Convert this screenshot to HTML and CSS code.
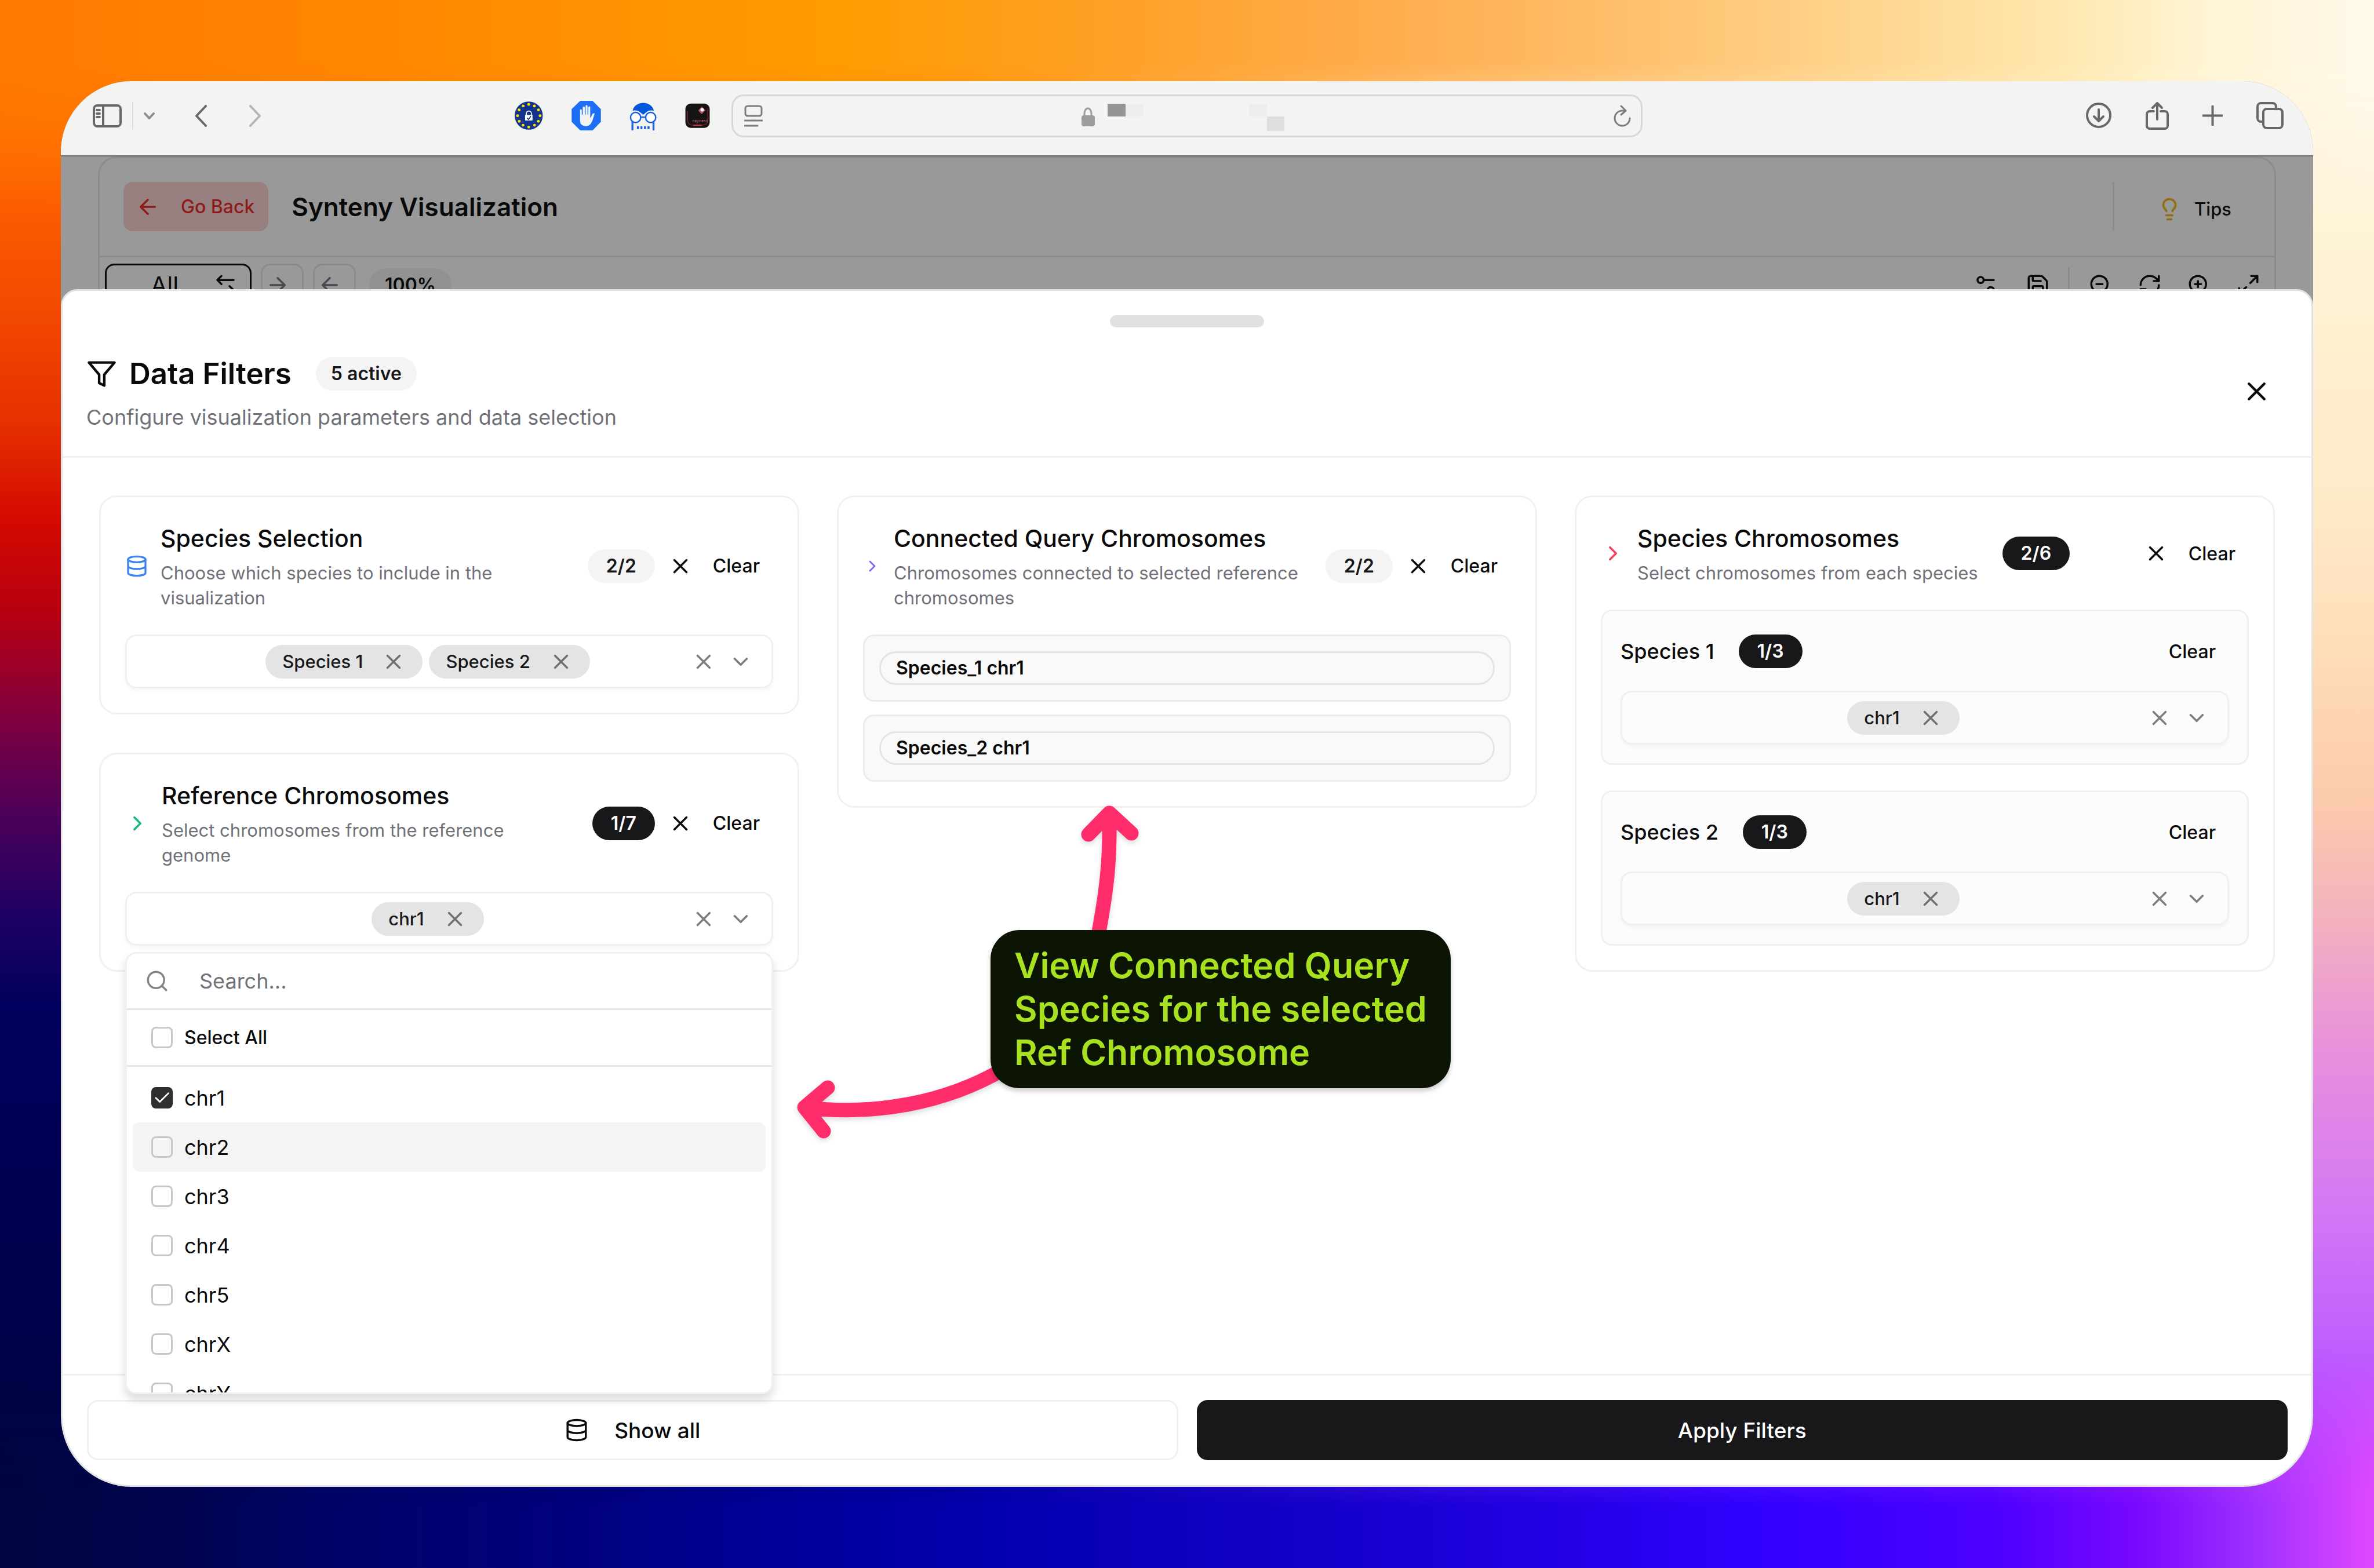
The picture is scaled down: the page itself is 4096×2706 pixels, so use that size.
FILE: index.html
```html
<!DOCTYPE html>
<html lang="en">
<head>
<meta charset="utf-8">
<title>Synteny Visualization</title>
<link rel="stylesheet" href="styles.css">
</head>
<body>
<svg class="sprite" aria-hidden="true">
  <symbol id="i-x" viewBox="0 0 24 24"><path d="M18 6 6 18M6 6l12 12"/></symbol>
  <symbol id="i-down" viewBox="0 0 24 24"><path d="m6 9 6 6 6-6"/></symbol>
  <symbol id="i-right" viewBox="0 0 24 24"><path d="m9 18 6-6-6-6"/></symbol>
  <symbol id="i-db" viewBox="0 0 24 24"><ellipse cx="12" cy="5" rx="9" ry="3"/><path d="M3 5v14a9 3 0 0 0 18 0V5M3 12a9 3 0 0 0 18 0"/></symbol>
  <symbol id="i-filter" viewBox="0 0 24 24"><path d="M22 3H2l8 9.46V19l4 2v-8.54z"/></symbol>
  <symbol id="i-arrow-left" viewBox="0 0 24 24"><path d="m12 19-7-7 7-7M19 12H5"/></symbol>
  <symbol id="i-arrow-right" viewBox="0 0 24 24"><path d="M5 12h14M12 5l7 7-7 7"/></symbol>
  <symbol id="i-swap" viewBox="0 0 24 24"><path d="M8 3 4 7l4 4M4 7h16M16 21l4-4-4-4M20 17H4"/></symbol>
  <symbol id="i-bulb" viewBox="0 0 24 24"><path d="M15 14c.2-1 .7-1.700 1.500-2.500 1-.9 1.500-2.200 1.500-3.500A6 6 0 0 0 6 8c0 1 .2 2.200 1.500 3.500.7.7 1.300 1.500 1.500 2.500M9 18h6M10 22h4"/></symbol>
  <symbol id="i-settings" viewBox="0 0 24 24"><path d="M20 7h-9M14 17H5"/><circle cx="17" cy="17" r="3"/><circle cx="7" cy="7" r="3"/></symbol>
  <symbol id="i-save" viewBox="0 0 24 24"><path d="M15.200 3a2 2 0 0 1 1.400.6l3.800 3.800a2 2 0 0 1 .6 1.400V19a2 2 0 0 1-2 2H5a2 2 0 0 1-2-2V5a2 2 0 0 1 2-2zM17 21v-7a1 1 0 0 0-1-1H8a1 1 0 0 0-1 1v7M7 3v4a1 1 0 0 0 1 1h7"/></symbol>
  <symbol id="i-zoom-out" viewBox="0 0 24 24"><circle cx="11" cy="11" r="8"/><path d="m21 21-4.350-4.350M8 11h6"/></symbol>
  <symbol id="i-zoom-in" viewBox="0 0 24 24"><circle cx="11" cy="11" r="8"/><path d="m21 21-4.350-4.350M11 8v6M8 11h6"/></symbol>
  <symbol id="i-refresh" viewBox="0 0 24 24"><path d="M3 12a9 9 0 0 1 9-9 9.750 9.750 0 0 1 6.740 2.740L21 8M21 3v5h-5M21 12a9 9 0 0 1-9 9 9.750 9.750 0 0 1-6.740-2.740L3 16M8 16H3v5"/></symbol>
  <symbol id="i-expand" viewBox="0 0 24 24"><path d="M15 3h6v6M9 21H3v-6M21 3l-7 7M3 21l7-7"/></symbol>
  <symbol id="i-search" viewBox="0 0 24 24"><circle cx="11" cy="11" r="8"/><path d="m21 21-4.350-4.350"/></symbol>
</svg>

<div class="backdrop" aria-hidden="true"></div>

<main class="window">
  <header class="toolbar">
    <nav class="history">
      <button class="tool" aria-label="Sidebar"><svg width="50" height="40" viewBox="0 0 50 40"><rect x="2" y="2" width="46" height="36" rx="6"/><path d="M18 2v36M7 10h5M7 16h5M7 22h5"/></svg></button>
      <span class="bar-rule"></span>
      <button class="tool faint" aria-label="Tab groups"><svg width="19" height="12" viewBox="0 0 19 12"><path d="m2 2 7.500 8L17 2"/></svg></button>
      <button class="tool back" aria-label="Back"><svg width="21" height="38" viewBox="0 0 21 38"><path d="M19 2 3 19l16 17"/></svg></button>
      <button class="tool forward" aria-label="Forward"><svg width="21" height="38" viewBox="0 0 21 38"><path d="m2 2 16 17L2 36"/></svg></button>
    </nav>
    <div class="extensions">
      <button class="tool" aria-label="Privacy"><svg class="plain" width="49" height="49" viewBox="54 101 180 180">
        <circle cx="143" cy="191" r="89" fill="#12348c"/>
        <g fill="#ffe100"><circle cx="143" cy="120" r="9"/><circle cx="179" cy="130" r="9"/><circle cx="205" cy="155" r="9"/><circle cx="215" cy="192" r="9"/><circle cx="204" cy="227" r="9"/><circle cx="180" cy="252" r="9"/><circle cx="143" cy="264" r="9"/><circle cx="107" cy="252" r="9"/><circle cx="83" cy="227" r="9"/><circle cx="72" cy="192" r="9"/><circle cx="82" cy="155" r="9"/><circle cx="108" cy="130" r="9"/></g>
        <path d="M128 190v-12a16 16 0 0 1 32 0v12" fill="none" stroke="#fff" stroke-width="6"/><rect x="120" y="187" width="47" height="35" fill="#fff"/><path d="m134 207 8 9 13-20" fill="none" stroke="#12348c" stroke-width="6"/></svg></button>
      <button class="tool" aria-label="Content blocker"><svg class="plain" width="51" height="51" viewBox="408 98 184 186">
        <path d="M462 98h78l52 52v80l-52 54h-78l-54-54v-80z" fill="#1c6ff6"/>
        <path d="M461 225v-70q5-8 11 0v30h6v-47q6-9 13 0v47h5v-56q6-9 12 0v56h5v-48q6-8 12 0v69q6-3 12-22 6-10 16-7-8 28-17 52-12 28-39 29-35-2-36-33z" fill="#f3f3f1"/></svg></button>
      <button class="tool" aria-label="Disguise"><svg class="plain" width="47" height="50" viewBox="764 102 172 182">
        <path d="M784 160a68 60 0 0 1 134 0q-32-7-52 14l-15 12-15-12q-20-21-52-14z" fill="#0557dc"/>
        <g fill="none" stroke="#1a60e4" stroke-width="9"><circle cx="803" cy="203" r="32" fill="#fff"/><circle cx="898" cy="203" r="32" fill="#fff"/><path d="M835 201h32"/><path d="M783 230v54M916 230v54" stroke-width="12"/></g>
        <path d="M811 258h13v18h-13zM834 258h12v18h-12zM856 258h12v18h-12zM878 258h13v18h-13z" fill="#1a60e4"/></svg></button>
      <button class="tool" aria-label="Launcher"><svg class="plain" width="43" height="43" viewBox="1126 112 156 156">
        <rect x="1128" y="115" width="152" height="152" rx="34" fill="#161314"/>
        <path d="M1142 165v54q0 30 30 30h64q32 0 32-30v-70" fill="none" stroke="#7d2028" stroke-width="5"/><path d="M1180 251h48" stroke="#d43a44" stroke-width="7"/>
        <path d="m1231 134 22 22-23 25-22-23z" fill="#b25a62"/><circle cx="1233" cy="154" r="11" fill="#fff"/>
        <text x="1170" y="230" font-family="Liberation Mono, monospace" font-size="24" fill="#d4727a">raycast</text></svg></button>
    </div>
    <div class="address">
      <button class="tool grey" aria-label="Reader"><svg width="32" height="38" viewBox="0 0 32 38"><rect x="2" y="2" width="28" height="17" rx="4"/><path d="M1 27h30M1 36h22"/></svg></button>
      <svg class="plain" width="366" height="52" viewBox="0 -5 366 52" role="img" aria-label="Secure site"><path d="M5 22v-5a6 9 0 0 1 12 0v5" fill="none" stroke="#9d9d9d" stroke-width="3"/><rect x="0" y="20" width="23" height="19" rx="4" fill="#9d9d9d"/><path d="M45 0h31v22H45z" fill="#949494"/><path d="M76 0h31v22H76zM289 0h31v22h-31z" fill="#ededeb"/><path d="M320 22h30v25h-30z" fill="#dededc"/></svg>
      <button class="tool grey" aria-label="Reload"><svg width="32" height="38" viewBox="0 0 32 38"><path d="M15 2l8 8-8 7M23 10h-6a13 13 0 1 0 13 13"/></svg></button>
    </div>
    <div class="actions">
      <button class="tool" aria-label="Downloads"><svg width="45" height="45" viewBox="0 0 45 45"><circle cx="22" cy="22" r="20"/><path d="M22 12v20M14 24l8 8 8-8"/></svg></button>
      <button class="tool" aria-label="Share"><svg width="40" height="49" viewBox="0 0 40 49"><path d="M14 17H7a5 5 0 0 0-5 5v20a5 5 0 0 0 5 5h26a5 5 0 0 0 5-5V22a5 5 0 0 0-5-5h-7M20 31V3M12 11l8-8 8 8"/></svg></button>
      <button class="tool" aria-label="New tab"><svg width="35" height="35" viewBox="0 0 35 35"><path d="M17.500 1v33M1 17.500h33"/></svg></button>
      <button class="tool" aria-label="Tab overview"><svg width="47" height="47" viewBox="0 0 47 47"><rect x="12" y="12" width="33" height="33" rx="6"/><path d="M12 34H8a6 6 0 0 1-6-6V8a6 6 0 0 1 6-6h20a6 6 0 0 1 6 6v4"/></svg></button>
    </div>
  </header>

  <section class="page">
    <div class="panel">
      <div class="panel-head">
        <button class="go-back"><svg class="icon"><use href="#i-arrow-left"/></svg>Go Back</button>
        <h1>Synteny Visualization</h1>
        <span class="head-rule"></span>
        <button class="tips"><svg class="icon"><use href="#i-bulb"/></svg>Tips</button>
      </div>
      <div class="panel-tools">
        <button class="all">All <svg class="icon"><use href="#i-swap"/></svg></button>
        <button class="step" aria-label="Next"><svg class="icon"><use href="#i-arrow-right"/></svg></button>
        <button class="step" aria-label="Previous"><svg class="icon"><use href="#i-arrow-left"/></svg></button>
        <span class="scale">100%</span>
        <button class="square push" aria-label="Settings"><svg class="icon"><use href="#i-settings"/></svg></button>
        <button class="square spaced" aria-label="Save"><svg class="icon"><use href="#i-save"/></svg></button>
        <span class="tools-rule"></span>
        <button class="square" aria-label="Zoom out"><svg class="icon"><use href="#i-zoom-out"/></svg></button>
        <button class="square" aria-label="Reset"><svg class="icon"><use href="#i-refresh"/></svg></button>
        <button class="square" aria-label="Zoom in"><svg class="icon"><use href="#i-zoom-in"/></svg></button>
        <button class="square" aria-label="Full screen"><svg class="icon"><use href="#i-expand"/></svg></button>
      </div>
    </div>
  </section>

  <section class="sheet">
    <div class="handle"></div>
    <header class="sheet-head">
      <div>
        <div class="sheet-title"><svg class="icon large"><use href="#i-filter"/></svg><h2>Data Filters</h2><span class="badge soft words">5 active</span></div>
        <p>Configure visualization parameters and data selection</p>
      </div>
      <button class="close" aria-label="Close"><svg class="icon large"><use href="#i-x"/></svg></button>
    </header>

    <div class="filters">
      <div class="column">
        <article class="card">
          <div class="card-head">
            <svg class="icon medium blue"><use href="#i-db"/></svg>
            <div class="card-text"><h3>Species Selection</h3><p>Choose which species to include in the visualization</p></div>
            <span class="badge soft">2/2</span>
            <button class="clear"><svg class="icon"><use href="#i-x"/></svg>Clear</button>
          </div>
          <div class="select">
            <div class="chips">
              <span class="chip">Species 1<button aria-label="Remove Species 1"><svg class="icon"><use href="#i-x"/></svg></button></span>
              <span class="chip">Species 2<button aria-label="Remove Species 2"><svg class="icon"><use href="#i-x"/></svg></button></span>
            </div>
            <button aria-label="Clear selection"><svg class="icon"><use href="#i-x"/></svg></button>
            <button aria-label="Open list"><svg class="icon"><use href="#i-down"/></svg></button>
          </div>
        </article>

        <article class="card">
          <div class="card-head">
            <svg class="icon green"><use href="#i-right"/></svg>
            <div class="card-text"><h3>Reference Chromosomes</h3><p>Select chromosomes from the reference genome</p></div>
            <span class="badge">1/7</span>
            <button class="clear"><svg class="icon"><use href="#i-x"/></svg>Clear</button>
          </div>
          <div class="select">
            <div class="chips"><span class="chip">chr1<button aria-label="Remove chr1"><svg class="icon"><use href="#i-x"/></svg></button></span></div>
            <button aria-label="Clear selection"><svg class="icon"><use href="#i-x"/></svg></button>
            <button aria-label="Close list"><svg class="icon"><use href="#i-down"/></svg></button>
            <div class="menu">
              <label class="search"><svg class="icon"><use href="#i-search"/></svg><input type="text" placeholder="Search..." aria-label="Search"></label>
              <label class="select-all"><input type="checkbox">Select All</label>
              <div class="options">
                <label class="option"><input type="checkbox" checked>chr1</label>
                <label class="option active"><input type="checkbox">chr2</label>
                <label class="option"><input type="checkbox">chr3</label>
                <label class="option"><input type="checkbox">chr4</label>
                <label class="option"><input type="checkbox">chr5</label>
                <label class="option"><input type="checkbox">chrX</label>
                <label class="option"><input type="checkbox">chrY</label>
              </div>
            </div>
          </div>
        </article>
      </div>

      <article class="card">
        <div class="card-head">
          <svg class="icon small purple"><use href="#i-right"/></svg>
          <div class="card-text"><h3>Connected Query Chromosomes</h3><p>Chromosomes connected to selected reference chromosomes</p></div>
          <span class="badge soft">2/2</span>
          <button class="clear"><svg class="icon"><use href="#i-x"/></svg>Clear</button>
        </div>
        <ul class="linked">
          <li><span>Species_1 chr1</span></li>
          <li><span>Species_2 chr1</span></li>
        </ul>
      </article>

      <article class="card">
        <div class="card-head">
          <svg class="icon red"><use href="#i-right"/></svg>
          <div class="card-text"><h3>Species Chromosomes</h3><p>Select chromosomes from each species</p></div>
          <span class="badge">2/6</span>
          <button class="clear"><svg class="icon"><use href="#i-x"/></svg>Clear</button>
        </div>
        <div class="groups">
          <section class="group">
            <div class="group-head"><h4>Species 1</h4><span class="badge">1/3</span><button class="clear">Clear</button></div>
            <div class="select">
              <div class="chips"><span class="chip">chr1<button aria-label="Remove chr1"><svg class="icon"><use href="#i-x"/></svg></button></span></div>
              <button aria-label="Clear selection"><svg class="icon"><use href="#i-x"/></svg></button>
              <button aria-label="Open list"><svg class="icon"><use href="#i-down"/></svg></button>
            </div>
          </section>
          <section class="group">
            <div class="group-head"><h4>Species 2</h4><span class="badge">1/3</span><button class="clear">Clear</button></div>
            <div class="select">
              <div class="chips"><span class="chip">chr1<button aria-label="Remove chr1"><svg class="icon"><use href="#i-x"/></svg></button></span></div>
              <button aria-label="Clear selection"><svg class="icon"><use href="#i-x"/></svg></button>
              <button aria-label="Open list"><svg class="icon"><use href="#i-down"/></svg></button>
            </div>
          </section>
        </div>
      </article>
    </div>

    <footer class="sheet-foot">
      <button class="show-all"><svg class="icon"><use href="#i-db"/></svg>Show all</button>
      <button class="apply">Apply Filters</button>
    </footer>
  </section>

  <!-- Callout: drawn over the sheet, pointing at the two linked cards -->
  <svg class="arrows" width="660" height="700" viewBox="1340 1360 660 700" aria-hidden="true">
    <path d="M1878 1440l36-37 38 35M1914 1410C1915 1480 1912 1530 1888 1650"/>
    <path d="M1428 1877l-40 34 33 41M1392 1912C1510 1925 1630 1904 1730 1846"/>
  </svg>
  <p class="callout">View Connected Query<br>Species for the selected<br>Ref Chromosome</p>
</main>
</body>
</html>
```
FILE: styles.css
```css
* { box-sizing: border-box; }

body {
  margin: 0;
  min-height: 100vh;
  padding: 140px 105px;
  display: flex;
  position: relative;
  font-family: Inter, "Liberation Sans", sans-serif;
  font-size: 36px;
  color: #0a0a0b;
  background: linear-gradient(180deg, #ff7a00 0, #ff6400 10%, #f44c00 19%, #e63000 27%, #d40a00 33%, #b80010 39%, #7e0040 46%, #4c005a 52%, #200064 58%, #02005e 64%, #000050 78%, #000640 100%);
}

h1, h2, h3, h4, p, ul { margin: 0; padding: 0; }
ul { list-style: none; }

button {
  margin: 0;
  padding: 0;
  border: 0;
  background: none;
  color: inherit;
  font: inherit;
  display: inline-flex;
  align-items: center;
  justify-content: center;
}

svg {
  display: block;
  flex: none;
  fill: none;
  stroke: currentColor;
  stroke-width: 4px;
  stroke-linecap: round;
  stroke-linejoin: round;
}
svg.plain { stroke: none; }
.sprite { position: absolute; width: 0; height: 0; }
.icon { width: 42px; height: 42px; stroke-width: 2px; }
.icon.large { width: 53px; height: 53px; }
.icon.medium { width: 40px; height: 40px; }
.icon.small { width: 32px; height: 32px; }
.blue { color: #3b82f6; }
.green { color: #10b981; }
.purple { color: #8b5cf6; }
.red { color: #f43f5e; }

/* Four-sided wallpaper: one gradient per edge, faded into its neighbours */
.backdrop, .backdrop::before, .backdrop::after { position: absolute; inset: 0; }
.backdrop::before, .backdrop::after { content: ""; }
.backdrop::before {
  background: linear-gradient(180deg, #fff8e8 0, #fff2d4 18%, #ffeac8 32%, #ffdcb8 42%, #fccaac 51%, #f4b4bc 58%, #e890dc 67%, #d478f4 77%, #bc5cff 87%, #c04cff 94%, #e04cf8 100%);
  -webkit-mask-image: linear-gradient(90deg, transparent 40%, #000 60%);
  mask-image: linear-gradient(90deg, transparent 40%, #000 60%);
}
.backdrop::after {
  background:
    linear-gradient(90deg, #ff7a00 0, #ff8400 13%, #ff9c00 35%, #ff9f20 45%, #ffac4c 58%, #ffbe6a 68%, #ffd48c 78%, #ffe8b0 87%, #fff4d4 93%, #fff9ea 100%) top / 100% 50% no-repeat,
    linear-gradient(90deg, #000640 0, #00044e 7%, #000468 14%, #000080 25%, #00009c 34%, #0400b0 42%, #1000c4 53%, #2000e0 64%, #3000ff 74%, #4c00ff 84%, #7808ff 90%, #a030ff 95%, #e048ff 100%) bottom / 100% 50% no-repeat;
  -webkit-mask-image: linear-gradient(180deg, #000 0, #000 4%, transparent 14%, transparent 86%, #000 96%, #000 100%);
  mask-image: linear-gradient(180deg, #000 0, #000 4%, transparent 14%, transparent 86%, #000 96%, #000 100%);
}

.window {
  position: relative;
  flex: 1;
  min-width: 0;
  display: flex;
  flex-direction: column;
  overflow: hidden;
  border-radius: 122px;
  background: #999;
}

/* Browser toolbar */
.toolbar {
  display: flex;
  align-items: center;
  height: 130px;
  padding: 0 51px 9px 55px;
  background: #f3f3f1;
  border-bottom: 2px solid #6c6c6e;
  color: #686867;
}
.history, .extensions, .actions { display: flex; align-items: center; }
.bar-rule { width: 2px; height: 47px; margin: 0 18px; background: #dededc; }
.faint { color: #8f8f90; }
.back { margin-left: 69px; }
.forward { margin-left: 73px; color: #b5b5b5; }
.extensions { gap: 49px; margin: 0 37px 0 437px; }
.address {
  display: flex;
  flex: 0 1 1572px;
  align-items: center;
  justify-content: space-between;
  height: 74px;
  padding: 0 17px 0 19px;
  border: 3px solid #d7d7d5;
  border-radius: 21px;
}
.grey { color: #7d7d7d; }
.address .tool svg { stroke-width: 3px; }
.actions { gap: 58px; margin-left: auto; }

/* Dimmed page behind the sheet */
.page { height: 229px; padding: 0 64px; overflow: hidden; }
.panel { height: 400px; border: 3px solid #8b8b8c; border-radius: 32px; }
.panel-head {
  display: flex;
  align-items: center;
  padding: 41px 74px 42px 41px;
  border-bottom: 3px solid #8b8b8c;
}
.go-back {
  height: 85px;
  padding: 0 24px 0 21px;
  gap: 36px;
  border-radius: 16px;
  background: #998080;
  color: #8e1b1b;
  font-size: 32px;
  font-weight: 500;
}
h1 { margin-left: 40px; font-size: 44px; font-weight: 600; line-height: 64px; }
.head-rule { width: 3px; height: 85px; margin-left: auto; background: #8b8b8c; }
.tips { margin-left: 74px; padding-top: 8px; gap: 22px; font-size: 31px; font-weight: 500; }
.tips .icon { color: #946c08; }
.panel-tools { display: flex; align-items: center; padding: 11px 3px 11px 9px; }
.all {
  width: 253px;
  height: 74px;
  padding: 0 21px 0 76px;
  justify-content: space-between;
  border: 3px solid #0a0a0b;
  border-radius: 16px;
  font-size: 41px;
}
.step {
  width: 74px;
  height: 74px;
  margin-left: 16px;
  padding-right: 16px;
  border: 3px solid #8b8b8c;
  border-radius: 16px;
  color: #48484e;
}
.scale {
  margin-left: 23px;
  padding: 0 27px;
  border-radius: 29px;
  background: #919191;
  font-size: 32px;
  font-weight: 600;
  line-height: 58px;
}
.square { width: 85px; height: 74px; }
.push { margin-left: auto; }
.spaced { margin-left: 5px; }
.tools-rule { width: 3px; height: 63px; margin: 0 10px; background: #8b8b8c; }

/* Filter sheet */
.sheet {
  flex: 1;
  display: flex;
  flex-direction: column;
  border: 3px solid #e4e4e7;
  border-radius: 29px 29px 122px 122px;
  background: #fff;
}
.handle { width: 266px; height: 21px; margin: 42px auto 0; border-radius: 11px; background: #e1e1e1; }
.sheet-head {
  display: flex;
  justify-content: space-between;
  padding: 51px 58px 42px 41px;
  border-bottom: 3px solid #f0f0f0;
}
.sheet-title { display: flex; align-items: center; gap: 21px; height: 58px; }
.sheet-title .badge { margin-left: 21px; }
h2 { font-size: 51px; font-weight: 600; line-height: 58px; }
.sheet-head p { margin-top: 21px; line-height: 50px; color: #71717a; }
.close { width: 74px; height: 118px; }

.badge {
  flex: none;
  padding: 0 32px;
  border-radius: 29px;
  background: #18181b;
  color: #fff;
  font-size: 32px;
  font-weight: 600;
  line-height: 58px;
}
.badge.soft { background: #f4f4f4; color: #18181b; }
.badge.words { padding: 0 26px; }

.filters {
  flex: 1;
  display: grid;
  grid-template-columns: repeat(3, minmax(0, 1fr));
  align-items: start;
  gap: 65px;
  padding: 65px 63px;
}
.column { display: grid; gap: 66px; }
.card {
  padding: 42px;
  border: 3px solid #f1f1f1;
  border-radius: 30px;
}
.card-head { display: flex; align-items: center; margin-bottom: 42px; }
.card-text { margin: 0 42px 0 21px; }
h3 { font-size: 41px; font-weight: 500; line-height: 58px; }
.card-text p { margin-top: 9px; font-size: 31px; line-height: 43px; color: #71717a; }
.clear {
  flex: none;
  height: 74px;
  margin-left: auto;
  padding: 0 23px;
  gap: 35px;
  font-size: 32px;
  font-weight: 500;
}

.select {
  position: relative;
  display: flex;
  align-items: center;
  height: 93px;
  padding: 0 32px 0 86px;
  gap: 22px;
  border: 3px solid #f0f0f0;
  border-radius: 19px;
  box-shadow: 0 4px 6px rgba(0, 0, 0, .04);
  color: #7d7d7d;
}
.chips { flex: 1; display: flex; justify-content: center; gap: 11px; }
.chip {
  display: flex;
  align-items: center;
  height: 58px;
  padding: 0 29px;
  gap: 32px;
  border-radius: 29px;
  background: #e4e4e4;
  color: #18181b;
  font-size: 31px;
  font-weight: 500;
}
.chip button { color: #707070; }

.menu {
  position: absolute;
  z-index: 2;
  top: calc(100% + 14px);
  left: -3px;
  right: -3px;
  border: 3px solid #f0f0f0;
  border-radius: 19px;
  background: #fff;
  box-shadow: 0 10px 16px rgba(0, 0, 0, .14);
  color: #0a0a0b;
}
.search {
  display: flex;
  align-items: center;
  height: 97px;
  padding: 0 31px;
  gap: 52px;
  border-bottom: 3px solid #e4e4e7;
  color: #858585;
}
.search input { flex: 1; border: 0; padding: 0; background: none; font: inherit; outline: 0; }
.search input::placeholder { color: #71717a; opacity: 1; }
.select-all {
  display: flex;
  align-items: center;
  height: 98px;
  padding: 0 42px;
  gap: 20px;
  border-bottom: 3px solid #e4e4e7;
  font-size: 32px;
  font-weight: 500;
}
.options { height: 562px; padding: 11px 10px; overflow: hidden; }
.option {
  display: flex;
  align-items: center;
  height: 85px;
  padding: 0 32px;
  gap: 20px;
  border-radius: 11px;
}
.option.active { background: #f4f4f4; }
.menu input[type="checkbox"] {
  appearance: none;
  width: 37px;
  height: 37px;
  margin: 0;
  border: 3px solid #c8c8c8;
  border-radius: 8px;
}
.menu input[type="checkbox"]:checked {
  border-color: #2f2f31;
  background: #2f2f31 url("data:image/svg+xml,%3Csvg xmlns='http://www.w3.org/2000/svg' viewBox='0 0 24 24' fill='none' stroke='white' stroke-width='2' stroke-linecap='round' stroke-linejoin='round'%3E%3Cpath d='M20 6 9 17l-5-5'/%3E%3C/svg%3E") center / 32px no-repeat;
}

.linked { display: grid; gap: 22px; }
.linked li {
  padding: 26px 25px;
  border: 3px solid #ececec;
  border-radius: 19px;
  background: #f9f9f9;
}
.linked span {
  display: block;
  padding: 0 26px;
  border: 3px solid #e4e4e7;
  border-radius: 29px;
  font-size: 32px;
  font-weight: 600;
  line-height: 52px;
}

.groups { display: grid; gap: 44px; }
.group {
  padding: 32px 31px;
  border: 3px solid #f0f0f0;
  border-radius: 19px;
  background: #fcfcfc;
}
.group-head { display: flex; align-items: center; margin-bottom: 31px; }
h4 { margin-right: 42px; font-size: 36px; font-weight: 500; }

.sheet-foot {
  display: grid;
  grid-template-columns: 1fr 1fr;
  gap: 32px;
  padding: 42px 41px 43px 42px;
  border-top: 3px solid #f0f0f0;
}
.sheet-foot button { height: 104px; gap: 44px; border-radius: 19px; font-size: 37px; font-weight: 500; }
.show-all { border: 3px solid #f0f0f0; }
.apply { background: #18181b; color: #fff; }

/* Callout */
.arrows {
  position: absolute;
  left: 1235px;
  top: 1220px;
  z-index: 3;
  color: #ff2d6b;
  stroke-width: 25px;
  filter: drop-shadow(0 4px 5px rgba(0, 0, 0, .14));
}
.callout {
  position: absolute;
  left: 1604px;
  top: 1465px;
  z-index: 4;
  padding: 24px 41px;
  border-radius: 50px;
  background: #0c1503;
  box-shadow: 0 5px 9px rgba(0, 0, 0, .2);
  color: #a8e11f;
  font-size: 61px;
  font-weight: 600;
  line-height: 75px;
}
```
